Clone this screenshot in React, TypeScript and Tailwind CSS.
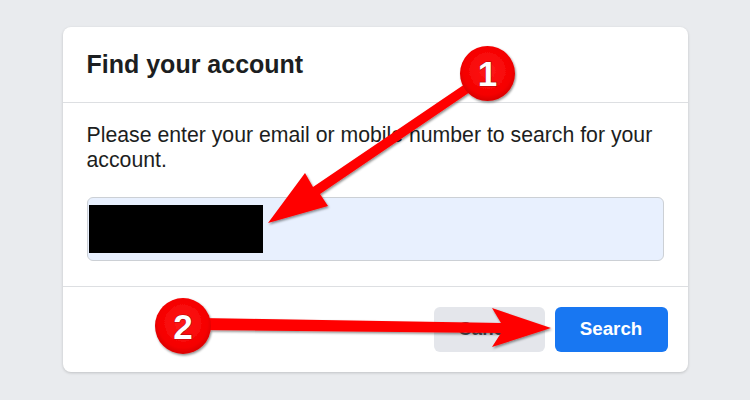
import React from "react";

const font = { fontFamily: '"Liberation Sans", Arial, Helvetica, sans-serif' };

function Annotations() {
  return (
    <svg
      className="absolute left-0 top-0 pointer-events-none"
      width={750}
      height={400}
      viewBox="0 0 750 400"
    >
      <defs>
        <filter id="sh" x="-20%" y="-20%" width="140%" height="140%">
          <feDropShadow dx="1" dy="1.5" stdDeviation="1.2" floodColor="#000" floodOpacity="0.45" />
        </filter>
        <radialGradient id="cg" cx="50%" cy="45%" r="55%">
          <stop offset="0%" stopColor="#ff1a1a" />
          <stop offset="80%" stopColor="#f50000" />
          <stop offset="100%" stopColor="#d80000" />
        </radialGradient>
      </defs>
      {/* Arrow 1 */}
      <g filter="url(#sh)">
        <polygon
          fill="#ff0000"
          points="268,223 305,173 313,187 465,84 470,92 320,194 328,206"
        />
        <circle cx="487.5" cy="73.5" r="27.5" fill="url(#cg)" />
      </g>
      <text
        x="487.5"
        y="86"
        textAnchor="middle"
        fill="#fff"
        stroke="rgba(0,0,0,0.35)"
        strokeWidth="1.2"
        paintOrder="stroke"
        fontSize="35"
        fontWeight="700"
        style={font}
      >
        1
      </text>
      {/* Arrow 2 */}
      <g filter="url(#sh)">
        <polygon
          fill="#ff0000"
          points="551,328 492,308 501,323 200,318 200,330 501,333 492,347"
        />
        <circle cx="183" cy="326" r="28" fill="url(#cg)" />
      </g>
      <text
        x="183"
        y="338.5"
        textAnchor="middle"
        fill="#fff"
        stroke="rgba(0,0,0,0.35)"
        strokeWidth="1.2"
        paintOrder="stroke"
        fontSize="35"
        fontWeight="700"
        style={font}
      >
        2
      </text>
    </svg>
  );
}

export default function App() {
  return (
    <div className="relative w-full h-[400px] bg-[#e9ebee] overflow-hidden pt-[27px]" style={font}>
      <div className="mx-auto w-[625px] bg-white rounded-[8px] shadow-[0_1px_3px_rgba(0,0,0,0.18)]">
        <div className="h-[76px] border-b border-[#dddfe2] px-[24px] pt-[22px]">
          <h2 className="text-[25px] leading-[30px] font-bold text-[#1c1e21]">Find your account</h2>
        </div>
        <div className="px-[24px] pt-[20px] pb-[25px]">
          <p className="text-[21.25px] leading-[24.5px] text-[#1c1e21]">
            Please enter your email or mobile number to search for your account.
          </p>
          <div className="mt-[24.5px] h-[64px] rounded-[6px] border border-[#ccd0d5] bg-[#e8f0fe] flex items-center pl-[1px]">
            <div className="w-[174px] h-[48px] bg-black" />
          </div>
        </div>
        <div className="border-t border-[#dddfe2] px-[20px] pt-[20px] pb-[20px] flex justify-end gap-[10px]">
          <button className="w-[111px] h-[45px] rounded-[6px] bg-[#e4e6eb] text-[#4b4f56] text-[18.75px] font-bold">
            Cancel
          </button>
          <button className="w-[113px] h-[45px] rounded-[6px] bg-[#1877f2] text-white text-[18.75px] font-bold">
            Search
          </button>
        </div>
      </div>
      <Annotations />
    </div>
  );
}
